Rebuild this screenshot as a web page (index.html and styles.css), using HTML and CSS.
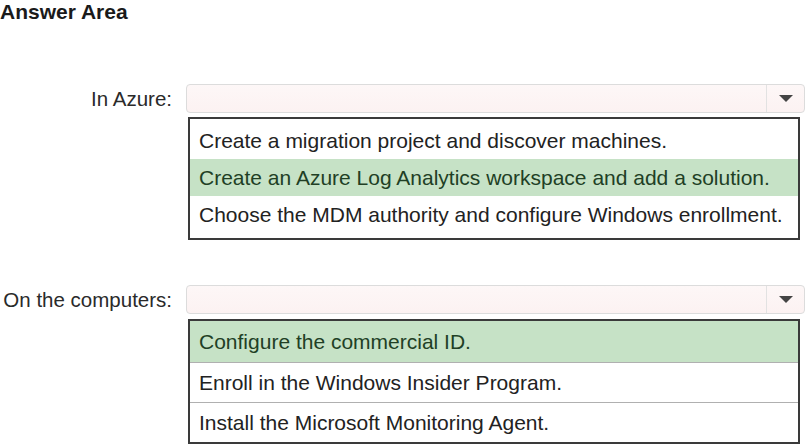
FILE: index.html
```html
<!DOCTYPE html>
<html lang="en">
<head>
  <meta charset="UTF-8">
  <title>Answer Area</title>
  <link rel="stylesheet" href="styles.css">
</head>
<body>
  <h2 class="titulo">Answer Area</h2>

  <div class="questao questao-azure">
    <div class="rotulo">In Azure:</div>
    <div class="campo">
      <div class="seletor">
        <span class="valor"></span>
        <span class="seta"></span>
      </div>
      <ul class="opcoes">
        <li>Create a migration project and discover machines.</li>
        <li class="marcada">Create an Azure Log Analytics workspace and add a solution.</li>
        <li>Choose the MDM authority and configure Windows enrollment.</li>
      </ul>
    </div>
  </div>

  <div class="questao questao-computadores">
    <div class="rotulo">On the computers:</div>
    <div class="campo">
      <div class="seletor">
        <span class="valor"></span>
        <span class="seta"></span>
      </div>
      <ul class="opcoes com-linhas">
        <li class="marcada">Configure the commercial ID.</li>
        <li>Enroll in the Windows Insider Program.</li>
        <li>Install the Microsoft Monitoring Agent.</li>
      </ul>
    </div>
  </div>
</body>
</html>
```

FILE: styles.css
```css
body {
  margin: 0;
  font-family: "Liberation Sans", Arial, sans-serif;
  color: #222;
  background: #fff;
}
.titulo {
  margin: 0;
  font-size: 21px;
  line-height: 24px;
  font-weight: bold;
  color: #1a1a1a;
}
.questao {
  display: grid;
  grid-template-columns: 172px 619px;
  column-gap: 14px;
}
.questao-azure {
  margin-top: 60px;
}
.questao-computadores {
  margin-top: 45px;
}
.rotulo {
  height: 29px;
  line-height: 29px;
  text-align: right;
  font-size: 20.5px;
  color: #2a2a2a;
}
.seletor {
  display: flex;
  height: 29px;
  box-sizing: border-box;
  border: 1px solid #dcdcdc;
  border-radius: 4px;
  background: linear-gradient(#fdf7f7, #fcf2f2);
}
.valor {
  flex: 1;
}
.seta {
  width: 37px;
  border-left: 1px solid #e2e2e2;
  display: flex;
  align-items: center;
  justify-content: center;
}
.seta::after {
  content: "";
  border-left: 7px solid transparent;
  border-right: 7px solid transparent;
  border-top: 7px solid #444;
}
.opcoes {
  list-style: none;
  margin: 4px 5px 0 2px;
  padding: 3px 0 5px;
  border: 2px solid #3a3a3a;
  font-size: 21px;
}
.opcoes li {
  height: 37px;
  line-height: 37px;
  padding-left: 9px;
  white-space: nowrap;
}
.opcoes li.marcada {
  background: #c6e2c6;
  color: #213f25;
}
.questao-computadores .opcoes {
  margin-top: 5px;
  padding: 0;
}
.com-linhas li {
  height: 40px;
  line-height: 40px;
}
.com-linhas li + li {
  border-top: 1px solid #b0b0b0;
  height: 39px;
  line-height: 39px;
}
.com-linhas li.marcada {
  height: 41px;
  line-height: 41px;
}
```
